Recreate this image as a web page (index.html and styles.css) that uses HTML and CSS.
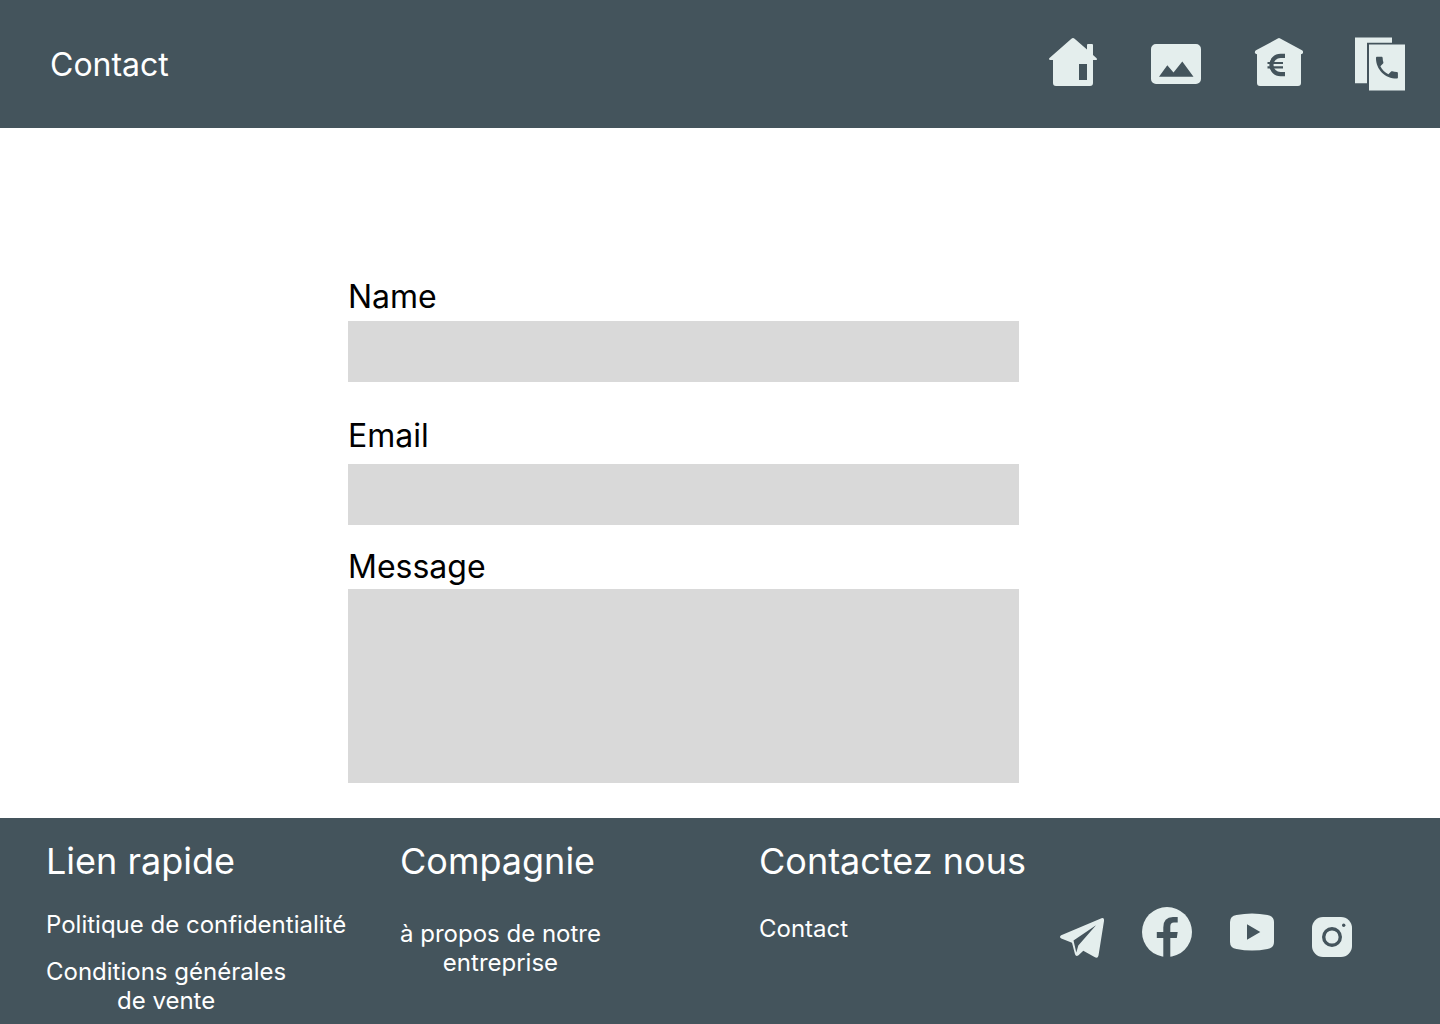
FILE: index.html
```html
<!DOCTYPE html>
<html lang="fr">
<head>
<meta charset="utf-8">
<meta name="viewport" content="width=device-width, initial-scale=1">
<title>Contact</title>
<link rel="stylesheet" href="styles.css">
</head>
<body>
<header class="site-header">
  <h1 class="page-title">Contact</h1>
  <nav class="main-nav" aria-label="Navigation principale">
    <a href="#accueil" aria-label="Accueil">
      <svg class="icon" width="50" height="54" viewBox="1 0 50 54">
        <path fill-rule="evenodd" d="M23.400 1.800q1.600-1.400 3.200 0L39 12.600V8q0-1 1-1h4q1 0 1 1v10l3.600 3.200q1.200 1.800-.6 1.800H45v23q0 3-3 3H8q-3 0-3-3V23H2.500q-2.500-.4-1-2zM31 27v16h8V27z"/>
      </svg>
    </a>
    <a href="#galerie" aria-label="Galerie">
      <svg class="icon" width="50" height="54" viewBox="0 0 50 54">
        <path fill-rule="evenodd" d="M5 7h40a5 5 0 0 1 5 5v30a5 5 0 0 1-5 5H5a5 5 0 0 1-5-5V12a5 5 0 0 1 5-5zM8 39.700h34.500L31.300 24.500 22.500 35.500 16.300 28.300z"/>
      </svg>
    </a>
    <a href="#tarifs" aria-label="Tarifs">
      <svg class="icon" width="50" height="54" viewBox="-1 0 50 54">
        <path d="M23.800 1.500q1.200-.8 2.400 0L48 13.300q1.500 1 1 2.700-.4 1-2 1.200V46q0 3-3 3H6q-3 0-3-3V17.200Q1.300 17 1 16q-.5-1.700 1-2.700z"/>
        <path class="cut-line" stroke-width="4.200" d="M31 18.900h-4.500a9.100 9.100 0 0 0 0 18.200H31"/>
        <path class="cut-line" stroke-width="2.200" d="M13.500 26h15.500M13.500 30.400h15.500"/>
      </svg>
    </a>
    <a href="#contact" aria-label="Contact">
      <svg class="icon" width="50" height="54" viewBox="1 0 50 54">
        <path d="M.5.500h37.500v5.300H13v40.500H.5z"/>
        <path d="M15 7.500h36.500v46H15z"/>
        <path class="cut" transform="translate(18.300 16) scale(1.220)" d="M6.620 10.790c1.440 2.830 3.760 5.140 6.590 6.590l2.200-2.200c.27-.27.67-.36 1.020-.24 1.120.37 2.330.57 3.570.57.55 0 1 .45 1 1V20c0 .55-.45 1-1 1-9.390 0-17-7.610-17-17 0-.55.45-1 1-1h3.500c.55 0 1 .45 1 1 0 1.250.2 2.450.57 3.570.11.35.03.74-.25 1.020z"/>
      </svg>
    </a>
  </nav>
</header>

<main class="content">
  <form class="contact-form">
    <div class="field field-name">
      <label for="name">Name</label>
      <input id="name" name="name" type="text">
    </div>
    <div class="field field-email">
      <label for="email">Email</label>
      <input id="email" name="email" type="email">
    </div>
    <div class="field field-message">
      <label for="message">Message</label>
      <textarea id="message" name="message"></textarea>
    </div>
  </form>
</main>

<footer class="site-footer">
  <section class="col col-links">
    <h2>Lien rapide</h2>
    <a href="#confidentialite">Politique de confidentialité</a>
    <a href="#conditions">Conditions générales<br>de vente</a>
  </section>
  <section class="col col-company">
    <h2>Compagnie</h2>
    <a href="#a-propos">à propos de notre<br>entreprise</a>
  </section>
  <section class="col col-contact">
    <h2>Contactez nous</h2>
    <a href="#contact">Contact</a>
  </section>
  <nav class="social" aria-label="Réseaux sociaux">
    <a href="#telegram" aria-label="Telegram">
      <svg class="icon" width="44" height="52" viewBox="0 0 44 52">
        <path fill-rule="evenodd" d="M41.500 11.200Q44.500 10.600 44 14L38.500 48.500Q37.700 52.200 34.500 50L23.300 43.700 18.500 48.300Q16 50.200 15 47.300L12 35.700 1.300 31.600Q-1.200 30 1.200 28.300zM36 18.300 13.500 33.500 16.300 45.600 18.300 38.500z"/>
      </svg>
    </a>
    <a href="#facebook" aria-label="Facebook">
      <svg class="icon" width="50" height="52" viewBox="0 0 50 52">
        <circle cx="25" cy="25" r="25"/>
        <path class="cut" d="M21.300 51V31h-6.500v-6h6.500v-4.500Q21.300 10 31 10h4.700v5.600H32q-3.700 0-3.700 4V25h7.400l-.9 6h-6.500v20z"/>
      </svg>
    </a>
    <a href="#youtube" aria-label="YouTube">
      <svg class="icon" width="44" height="52" viewBox="0 0 44 52">
        <path fill-rule="evenodd" d="M6.500 8Q22 5 37.500 8 44 9 44 15v20q0 6-6.500 7-15.500 3-31 0Q0 41 0 35V15Q0 9 6.500 8zM17 17.200v15.600L30.300 25z"/>
      </svg>
    </a>
    <a href="#instagram" aria-label="Instagram">
      <svg class="icon" width="40" height="52" viewBox="0 0 40 52">
        <rect y="10" width="40" height="40" rx="11"/>
        <circle class="cut-line" cx="20" cy="30" r="8.300" stroke-width="3.400"/>
        <circle class="cut" cx="31.700" cy="18.300" r="1.700"/>
      </svg>
    </a>
  </nav>
</footer>
</body>
</html>
```

FILE: styles.css
```css
:root {
  --slate: #44545c;
  --mist: #e4eeed;
  --field: #d9d9d9;
}

* {
  box-sizing: border-box;
}

body {
  display: flex;
  flex-direction: column;
  min-height: 100vh;
  margin: 0;
  background: #fff;
  color: #000;
  font-family: Inter, "Liberation Sans", sans-serif;
  font-size: 24px;
  line-height: 29px;
}

a {
  color: inherit;
  text-decoration: none;
}

h1,
h2 {
  margin: 0;
  font-weight: 400;
}

.icon {
  display: block;
  fill: var(--mist);
}

.icon .cut {
  fill: var(--slate);
}

.icon .cut-line {
  fill: none;
  stroke: var(--slate);
}

.site-header {
  display: flex;
  align-items: center;
  justify-content: space-between;
  min-height: 128px;
  padding: 0 35px 0 50px;
  background: var(--slate);
  color: #fff;
}

.page-title {
  font-size: 32px;
  line-height: 39px;
}

.main-nav {
  display: flex;
  gap: 52px;
}

.content {
  flex: 1;
  padding: 151px 24px 35px 348px;
}

.contact-form {
  max-width: 671px;
}

.field {
  display: flex;
  flex-direction: column;
}

.field label {
  font-size: 32px;
  line-height: 36px;
}

.field input,
.field textarea {
  width: 100%;
  height: 61px;
  margin: 0;
  padding: 12px 16px;
  border: 0;
  border-radius: 0;
  background: var(--field);
  font: inherit;
}

.field textarea {
  height: 194px;
  resize: none;
}

.field-name {
  gap: 6px;
  margin-bottom: 36px;
}

.field-email {
  gap: 10px;
  margin-bottom: 24px;
}

.field-message {
  gap: 4px;
}

.site-footer {
  display: grid;
  grid-template-columns: 354fr 359fr 301fr 334fr;
  padding: 21px 46px 9px;
  background: var(--slate);
  color: #fff;
}

.col {
  display: flex;
  flex-direction: column;
  align-items: flex-start;
}

.col h2 {
  font-size: 36px;
  line-height: 44px;
}

.col a {
  text-align: center;
}

.col-links {
  gap: 18px;
}

.col-links h2 {
  margin-bottom: 9px;
}

.col-company {
  gap: 36px;
}

.col-contact {
  gap: 31px;
}

.social {
  display: flex;
  align-items: flex-start;
  gap: 38px;
  padding-top: 68px;
}
```
